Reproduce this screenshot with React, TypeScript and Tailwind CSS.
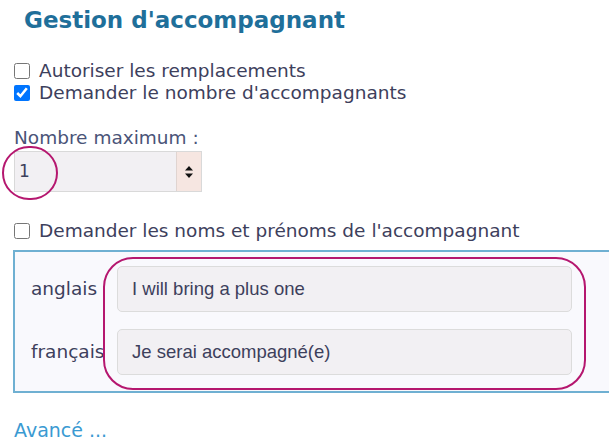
export default function App() {
  return (
    <div className="relative w-[609px] h-[447px] overflow-hidden bg-white font-['DejaVu_Sans',sans-serif] text-[#3d405c]">
      <div className="pl-[14px]">
        <h2 className="pl-[10px] pt-[6px] text-[23px] leading-[28px] font-bold text-[#1f6f9a]">
          Gestion d'accompagnant
        </h2>

        <div className="mt-[26px] flex flex-col">
          <label className="flex items-center gap-[9px] text-[18.5px] leading-[22px]">
            <input type="checkbox" className="w-[16px] h-[16px] m-0 accent-[#0075ff]" />
            Autoriser les remplacements
          </label>
          <label className="flex items-center gap-[9px] text-[18.5px] leading-[22px]">
            <input type="checkbox" defaultChecked className="w-[16px] h-[16px] m-0 accent-[#0075ff]" />
            Demander le nombre d'accompagnants
          </label>
        </div>

        <div className="mt-[23px] text-[18.5px] leading-[22px] text-[#4a5478]">Nombre maximum :</div>
        <div className="relative mt-[2px] w-[188px] h-[41px] flex border border-[#d9d9d9] bg-[#f2f0f3]">
          <div className="flex-1 flex items-center pl-[4px] text-[17px] text-[#3d405c]">1</div>
          <div className="w-[25px] flex items-center justify-center border-l border-[#e0d4d0] bg-[#f6e6e1]">
            <svg width="10" height="16" viewBox="0 0 10 16" className="text-[#111]">
              <path d="M5 2 L9 6.5 H1 Z" fill="currentColor" />
              <path d="M5 14 L9 9.5 H1 Z" fill="currentColor" />
            </svg>
          </div>
          <div className="absolute left-[-13px] top-[-6px] w-[56px] h-[54px] rounded-full border-2 border-[#b5176f]" />
        </div>

        <label className="mt-[28px] flex items-center gap-[9px] text-[18.5px] leading-[22px]">
          <input type="checkbox" className="w-[16px] h-[16px] m-0 accent-[#0075ff]" />
          Demander les noms et prénoms de l'accompagnant
        </label>

        <div className="relative mt-[8px] -ml-px w-[620px] border-2 border-[#6fb0d2] bg-[#f9f9fd] pt-[14px] pb-[16px] pl-[16px]">
          <div className="grid grid-cols-[86px_455px] gap-y-[17px] items-center">
            <span className="text-[18.5px]">anglais</span>
            <div className="h-[46px] flex items-center px-[14px] rounded-[5px] border border-[#dcdcdc] bg-[#f2f0f3] font-['Liberation_Sans',sans-serif] text-[18.5px]">
              I will bring a plus one
            </div>
            <span className="text-[18.5px]">français</span>
            <div className="h-[46px] flex items-center px-[14px] rounded-[5px] border border-[#dcdcdc] bg-[#f2f0f3] font-['Liberation_Sans',sans-serif] text-[18.5px]">
              Je serai accompagné(e)
            </div>
          </div>
          <div className="absolute left-[88px] top-[5px] w-[483px] h-[133px] rounded-[30px] border-2 border-[#b5176f]" />
        </div>

        <div className="mt-[25px] text-[19px] leading-[24px] text-[#3a9ad2]">Avancé ...</div>
      </div>
    </div>
  )
}
